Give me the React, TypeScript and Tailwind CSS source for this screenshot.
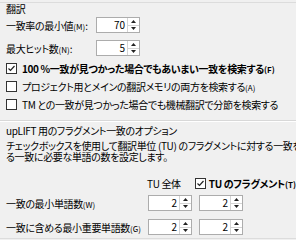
import React from 'react';

const font = { fontFamily: '"Noto Sans CJK JP", "Noto Sans", sans-serif' };

function Key({ k }: { k: string }) {
  return <span className="text-[8px] tracking-normal">({k})</span>;
}

function Spin({ value }: { value: string }) {
  return (
    <div className="w-[44px] h-[16px] border border-[#acacac] bg-white flex tracking-normal">
      <div className="flex-1 text-right pr-[2px] text-[10px] leading-[14px]">{value}</div>
      <div className="w-[12px] flex flex-col border-l border-[#d4d4d4]">
        <div className="flex-1 flex items-center justify-center border-b border-[#d4d4d4]">
          <svg width="5" height="3" viewBox="0 0 5 3"><path d="M0 3 L2.5 0 L5 3 Z" fill="#222" /></svg>
        </div>
        <div className="flex-1 flex items-center justify-center">
          <svg width="5" height="3" viewBox="0 0 5 3"><path d="M0 0 L5 0 L2.5 3 Z" fill="#222" /></svg>
        </div>
      </div>
    </div>
  );
}

function Check({ checked }: { checked?: boolean }) {
  return (
    <div className="w-[11px] h-[11px] border border-[#333] bg-white flex items-center justify-center shrink-0">
      {checked && (
        <svg width="9" height="9" viewBox="0 0 9 9">
          <path d="M1.5 4.5 L3.5 6.5 L7.5 2" stroke="#222" strokeWidth="1.2" fill="none" />
        </svg>
      )}
    </div>
  );
}

export default function App() {
  return (
    <div className="w-[296px] h-[240px] bg-[#f0f0f0] overflow-hidden text-black text-[10px] tracking-[-0.35px] whitespace-nowrap [font-feature-settings:'palt']" style={font}>
      {/* 翻訳 */}
      <div className="mt-[2px] h-[14px] border-t border-[#dcdcdc] px-[6px] leading-[12px]">翻訳</div>

      <div className="mt-[1px] h-[16px] flex items-center">
        <span className="w-[96px] pl-[6px]">一致率の最小値<Key k="M" />:</span>
        <Spin value="70" />
      </div>
      <div className="mt-[7px] h-[16px] flex items-center">
        <span className="w-[96px] pl-[6px]">最大ヒット数<Key k="N" />:</span>
        <Spin value="5" />
      </div>

      <div className="mt-[3px] h-[18px] flex items-center gap-[5px] pl-[6px]">
        <Check checked />
        <span className="font-bold">100 %一致が見つかった場合でもあいまい一致を検索する<Key k="F" /></span>
      </div>
      <div className="h-[18px] flex items-center gap-[5px] pl-[6px]">
        <Check />
        <span>プロジェクト用とメインの翻訳メモリの両方を検索する<Key k="A" /></span>
      </div>
      <div className="h-[18px] flex items-center gap-[5px] pl-[6px]">
        <Check />
        <span>TM との一致が見つかった場合でも機械翻訳で分節を検索する</span>
      </div>

      {/* upLIFT */}
      <div className="mt-[7px] border-t border-[#d8d8d8] border-b border-b-white" />
      <div className="mt-[3px] h-[12px] leading-[12px] px-[6px]">upLIFT 用のフラグメント一致のオプション</div>
      <div className="mt-[3px] px-[6px] leading-[11px]">
        <div>チェックボックスを使用して翻訳単位 (TU) のフラグメントに対する一致を有効にす</div>
        <div>る一致に必要な単語の数を設定します。</div>
      </div>

      <div className="mt-[14px] h-[14px] flex items-center">
        <div className="w-[148px]" />
        <div className="w-[52px] pl-[3px]">TU 全体</div>
        <div className="flex items-center gap-[3px]">
          <Check checked />
          <span className="font-bold">TU のフラグメント<Key k="T" /></span>
        </div>
      </div>

      <div className="mt-[5px] h-[16px] flex items-center">
        <span className="w-[148px] pl-[6px]">一致の最小単語数<Key k="W" /></span>
        <div className="flex gap-[7px]">
          <Spin value="2" />
          <Spin value="2" />
        </div>
      </div>
      <div className="mt-[8px] h-[16px] flex items-center">
        <span className="w-[148px] pl-[6px]">一致に含める最小重要単語数<Key k="G" /></span>
        <div className="flex gap-[7px]">
          <Spin value="2" />
          <Spin value="2" />
        </div>
      </div>
      <div className="mt-[3px] border-t border-[#dcdcdc]" />
    </div>
  );
}
